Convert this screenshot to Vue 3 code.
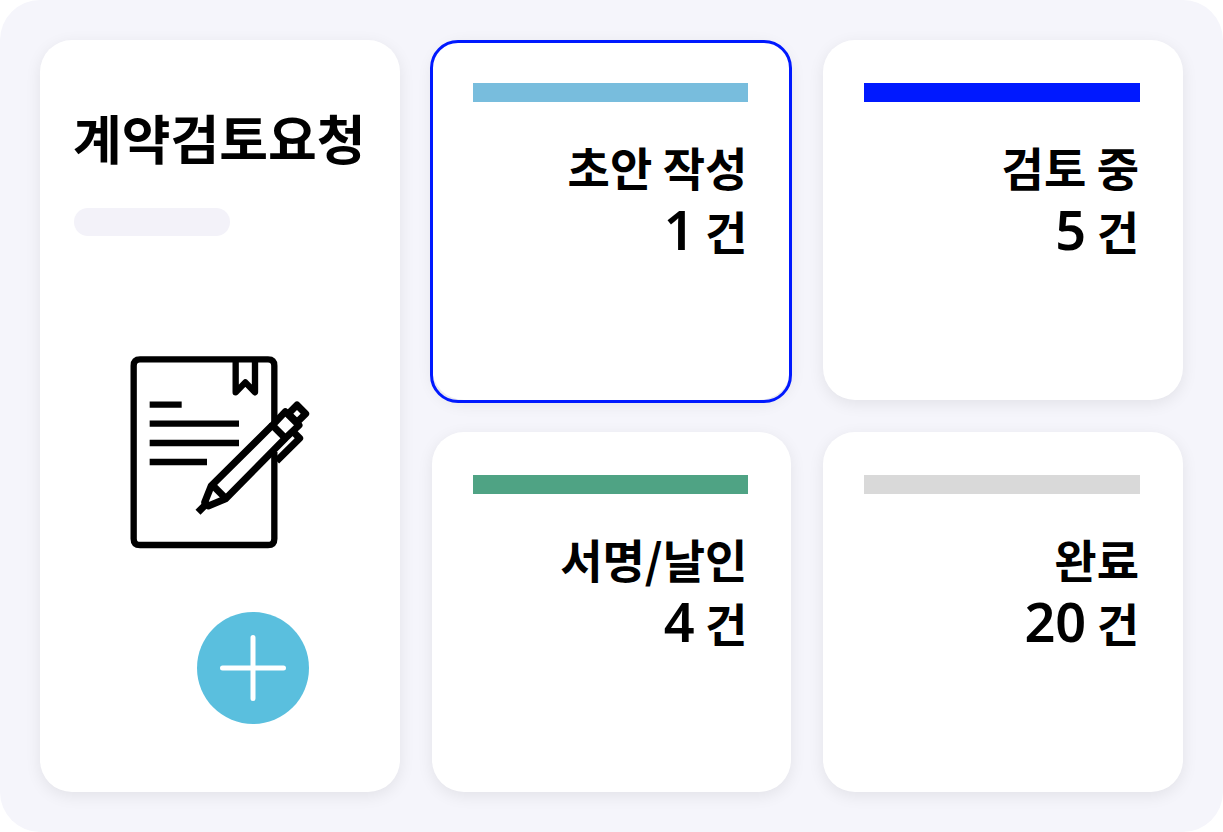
<script setup>
const stages = [
  { key: 'draft', label: '초안 작성', count: 1, selected: true },
  { key: 'review', label: '검토 중', count: 5, selected: false },
  { key: 'sign', label: '서명/날인', count: 4, selected: false },
  { key: 'done', label: '완료', count: 20, selected: false },
]
</script>

<template>
  <main class="board">
    <section class="card request">
      <h1 class="title">계약검토요청</h1>
      <div class="pill"></div>
      <svg class="document" viewBox="60 47 540 579" fill="none" stroke="#000" stroke-width="19" aria-hidden="true">
        <path d="M493 250V76Q493 57 474 57H90Q71 57 71 76V595Q71 614 90 614H474Q493 614 493 595V335" />
        <path d="M377 60V156L406 126L435 156V60" stroke-linejoin="round" stroke-linecap="round" />
        <path d="M119 193H215M119 250H387M119 308H387M119 365H291" />
        <g stroke-linejoin="round" stroke-width="21">
          <path d="M487 255L526 214L567 255L526 294Z" />
          <path d="M487 255L304 436L284 486L295 497L347 475L526 294" />
          <path d="M304 431L352 479" />
          <path d="M561 194L587 220L561 246L535 220Z" />
          <path d="M545 270L569 294L500 362" />
        </g>
        <path d="M291 489L264 516" stroke-width="21" />
      </svg>
      <button class="add" type="button" aria-label="계약검토요청 추가">
        <svg viewBox="0 0 112 112" fill="none" stroke="#fff" stroke-width="5" stroke-linecap="round" aria-hidden="true">
          <path d="M56 25.500V86.500M25.500 56H86.500" />
        </svg>
      </button>
    </section>

    <section
      v-for="stage in stages"
      :key="stage.key"
      class="card stage"
      :class="[stage.key, { selected: stage.selected }]"
    >
      <div class="bar"></div>
      <div class="text">
        <h2 class="label">{{ stage.label }}</h2>
        <p class="count"><span class="number">{{ stage.count }}</span> 건</p>
      </div>
    </section>
  </main>
</template>

<style>
body {
  margin: 0;
  background: #fff;
}
</style>

<style scoped>
.board {
  display: grid;
  grid-template-columns: repeat(3, minmax(0, 1fr));
  gap: 32px;
  box-sizing: border-box;
  padding: 40px;
  border-radius: 40px;
  background: #f5f5fb;
  color: #000;
  font-family: "Noto Sans CJK KR", sans-serif;
  font-weight: 700;
}

.card {
  position: relative;
  box-sizing: border-box;
  border-radius: 32px;
  background: #fff;
  box-shadow: 0 4px 16px rgba(0, 0, 0, 0.08);
}

.request {
  grid-row: span 2;
  display: flex;
  flex-direction: column;
  padding: 61px 33px 68px;
}

.title {
  margin: 0;
  font-size: 53px;
  font-weight: 700;
  line-height: 72px;
  white-space: nowrap;
}

.pill {
  width: 156px;
  height: 28px;
  margin: 35px 0 0 1px;
  border-radius: 14px;
  background: #f3f2f9;
}

.document {
  width: 180px;
  height: 193px;
  margin: 120px 0 0 57px;
}

.add {
  width: 112px;
  height: 112px;
  margin: auto 0 0 124px;
  padding: 0;
  border: 0;
  border-radius: 50%;
  background: #5abfde;
  cursor: pointer;
}

.add svg {
  display: block;
  width: 100%;
}

.stage {
  min-height: 360px;
  padding: 43px 43px 40px 41px;
}

.selected::after {
  content: "";
  position: absolute;
  inset: 0 -1px -3px -2px;
  border: 3px solid #0019ff;
  border-radius: 28px;
  pointer-events: none;
}

.bar {
  height: 19px;
  background: #d9d9d9;
}

.draft .bar {
  background: #78bddd;
}

.review .bar {
  background: #0019ff;
}

.sign .bar {
  background: #4fa384;
}

.text {
  padding: 32px 1px 0 0;
  text-align: right;
}

.label,
.count {
  margin: 0;
  font-size: 46px;
  font-weight: 700;
  line-height: 64px;
  white-space: nowrap;
}

.number {
  font-family: "Noto Sans", "Open Sans", sans-serif;
  font-size: 54px;
  font-weight: 600;
  line-height: 1;
}
</style>
